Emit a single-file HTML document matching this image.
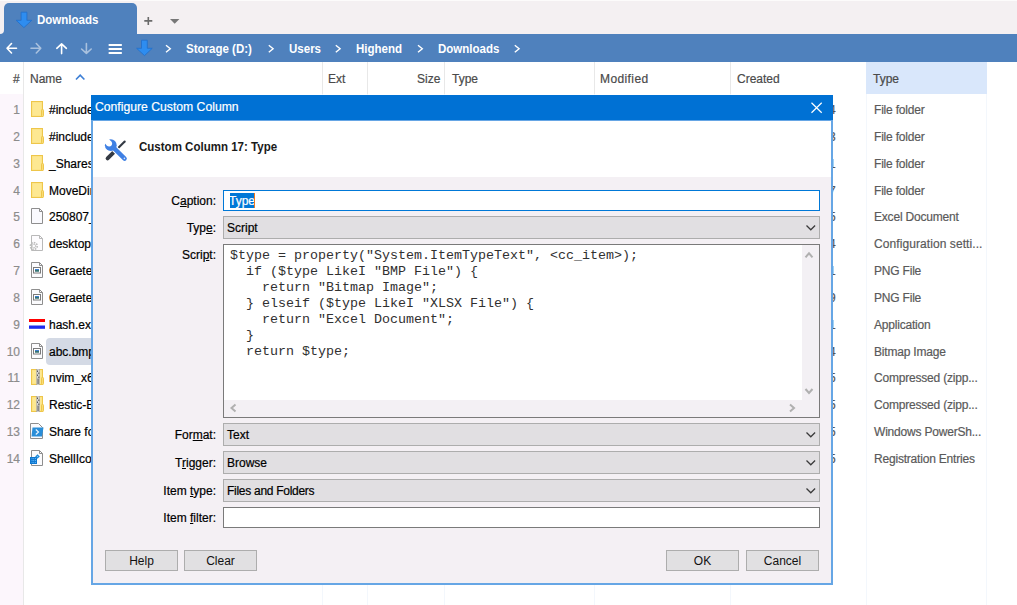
<!DOCTYPE html>
<html><head><meta charset="utf-8">
<style>
*{box-sizing:border-box;margin:0;padding:0}
html,body{width:1017px;height:605px;overflow:hidden}
body{position:relative;background:#fff;font-family:"Liberation Sans",sans-serif;font-size:12px;color:#000}
.a{position:absolute}
.t{position:absolute;line-height:16px;white-space:nowrap;font-size:12px;-webkit-text-stroke:0.2px currentColor}
.b{font-weight:bold;font-size:12.4px;transform:scaleX(.93);transform-origin:0 0;-webkit-text-stroke:0}
svg{position:absolute;overflow:visible}
/* tab bar */
#tabbar{left:0;top:0;width:1017px;height:34px;background:#f4f0f2;border-top:1px solid #fcfbfb}
#tab{left:4px;top:3px;width:133px;height:31px;background:#4f81bd;border-radius:5px 5px 0 0}
#nav{left:0;top:34px;width:1017px;height:28px;background:#4f81bd}
.wt{color:#fff}
/* header */
#hdr{left:0;top:62px;width:1017px;height:32px;background:#fff}
.hc{color:#4a4a4a}
.vl{position:absolute;width:1px;background:#e8e8e8}
.fl{position:absolute;width:1px;background:#f3f7fc;top:94px;height:511px}
.num{color:#8c8c8c;text-align:right;width:20px;left:0}
.nm{color:#000;left:49px}
.ty{color:#5a5a5a;left:874px;letter-spacing:-.2px}
/* dialog */
#dlg{left:91px;top:95px;width:742px;height:490px;background:#f4f0f4;border:2px solid #66a6e5;border-top:0}
#dtitle{left:91px;top:95px;width:742px;height:25px;background:#0071d4;border-bottom:1px solid #66a6e5;box-sizing:content-box}
#dhead{left:93px;top:121px;width:738px;height:56px;background:#fff}
.lbl{color:#000;text-align:right;width:120px;left:96px}
.u{text-decoration:underline;text-underline-offset:1px}
.inp{position:absolute;left:223px;width:597px;background:#fff;border:1px solid #7a7a7a}
.cmb{position:absolute;left:223px;width:597px;height:23px;background:#e1dfe2;border:1px solid #adadad}
.btn{position:absolute;top:550px;width:73px;height:21px;background:#e1e0e2;border:1px solid #adadad;text-align:center;line-height:19px;padding-top:1px;color:#111}
.code{position:absolute;font-family:"Liberation Mono",monospace;font-size:13.333px;line-height:16px;white-space:pre;color:#303030}
</style></head><body>
<svg width="0" height="0" style="position:absolute">
<defs>
 <symbol id="i-folder" viewBox="0 0 16 16">
  <rect x="2.5" y="0.5" width="11" height="15" fill="#fbe07f" stroke="#eec64a"/>
  <rect x="3.5" y="1.5" width="9" height="13" fill="#fde892"/>
  <rect x="12.5" y="8.5" width="2" height="7" rx="0.8" fill="#f9dc74" stroke="#eec64a"/>
 </symbol>
 <symbol id="i-zip" viewBox="0 0 16 16">
  <rect x="2.5" y="0.5" width="11" height="15" fill="#fbe07f" stroke="#eec64a"/>
  <rect x="3.5" y="1.5" width="9" height="13" fill="#fde892"/>
  <rect x="12.5" y="8.5" width="2" height="7" rx="0.8" fill="#f9dc74" stroke="#eec64a"/>
  <rect x="7.6" y="0" width="3" height="16" fill="#d6d6d6" stroke="#9a9a9a" stroke-width="0.5"/>
  <path d="M8.5 1.5v1.5M9.8 3.5v1.5M8.5 5.5v1.5M9.8 7.5v1.5" stroke="#4a4a4a" stroke-width="0.9"/>
  <rect x="8.2" y="9.5" width="1.8" height="5.5" fill="#8c8c8c"/>
 </symbol>
 <symbol id="i-doc" viewBox="0 0 16 16">
  <path d="M2.5 0.5H10.5L13.5 3.5V15.5H2.5Z" fill="#fafafe" stroke="#8e8e8e"/>
  <path d="M10.5 0.5V3.5H13.5" fill="none" stroke="#8e8e8e"/>
 </symbol>
 <symbol id="i-ini" viewBox="0 0 16 16">
  <path d="M2.5 0.5H10.5L13.5 3.5V15.5H2.5Z" fill="#fdfcfe" stroke="#b9b9b9"/>
  <path d="M10.5 0.5V3.5H13.5" fill="none" stroke="#b9b9b9"/>
  <circle cx="4.8" cy="11" r="3.4" fill="none" stroke="#bdbdbd" stroke-width="1.6" stroke-dasharray="1.6 1"/>
  <circle cx="4.8" cy="11" r="1.8" fill="none" stroke="#c8c8c8" stroke-width="1"/>
 </symbol>
 <symbol id="i-img" viewBox="0 0 16 16">
  <path d="M2.5 0.5H10.5L13.5 3.5V15.5H2.5Z" fill="#fbfbfd" stroke="#8e8e8e"/>
  <path d="M10.5 0.5V3.5H13.5" fill="none" stroke="#8e8e8e"/>
  <rect x="4.5" y="5.5" width="7" height="5.5" fill="#fff" stroke="#7b7b7b" stroke-width="1"/>
  <rect x="6" y="7" width="4" height="2.5" fill="#3f7fd0"/>
  <rect x="6" y="8.3" width="4" height="1.2" fill="#2f6d4a"/>
 </symbol>
 <symbol id="i-flag" viewBox="0 0 16 16">
  <rect x="0" y="3" width="16" height="3" fill="#f00"/>
  <rect x="0" y="6" width="16" height="3.5" fill="#fff"/>
  <rect x="0" y="9.5" width="16" height="3.3" fill="#1d2cf0"/>
 </symbol>
 <symbol id="i-ps" viewBox="0 0 16 16">
  <path d="M1.5 0.5H9.5L13.5 4.5V15.5H1.5Z" fill="#fbfbfd" stroke="#8e8e8e"/>
  <path d="M3.5 4.5H14.5L13 13.5H2.5Z" fill="#2a8ed8"/>
  <path d="M6.8 6.5L9.5 9 L6.8 11.5" stroke="#e8f4ff" stroke-width="1.2" fill="none"/>
 </symbol>
 <symbol id="i-reg" viewBox="0 0 16 16">
  <path d="M2.5 0.5H10.5L13.5 3.5V15.5H2.5Z" fill="#fbfbfd" stroke="#8e8e8e"/>
  <path d="M10.5 0.5V3.5H13.5" fill="none" stroke="#8e8e8e"/>
  <rect x="1" y="7" width="7" height="7" fill="#0e78d0"/>
  <path d="M2.6 8.6h0.9M4.3 8.6h0.9M6 8.6h0.9M2.6 10.5h0.9M4.3 10.5h0.9M6 10.5h0.9M2.6 12.4h0.9M4.3 12.4h0.9M6 12.4h0.9" stroke="#6cc0ff" stroke-width="0.9"/>
  <path d="M8.5 4.2L10.8 6.5L8.5 8.8L6.2 6.5Z" fill="#1d8ad8"/>
  <circle cx="8.5" cy="6.5" r="0.6" fill="#8fd0ff"/>
 </symbol>
</defs>
</svg>

<div id="tabbar" class="a"></div>
<div id="tab" class="a"></div>
<!-- inverse corner left of tab -->
<div class="a" style="left:0;top:28px;width:4px;height:6px;background:#4f81bd"></div>
<div class="a" style="left:-2px;top:22px;width:6px;height:12px;background:#f4f0f2;border-radius:0 0 4px 0"></div>

<svg style="left:0;top:0" width="40" height="40">
  <polygon points="21.1,12.2 26.9,12.2 26.9,20.3 31.8,20.3 23.9,27.6 16.2,20.3 21.1,20.3" fill="#2e8df0" stroke="#1f6fcc" stroke-width="0.8" stroke-linejoin="miter"/>
</svg>
<div class="t b wt" style="left:37px;top:12px">Downloads</div>
<svg style="left:0;top:0" width="200" height="40">
  <path d="M148.3 16.9 V24.9 M144.3 20.9 H152.3" stroke="#6b6b6b" stroke-width="1.6"/>
  <polygon points="170,19 179.4,19 174.7,23.8" fill="#777"/>
</svg>

<div id="nav" class="a"></div>
<svg style="left:0;top:0" width="540" height="64">
  <g stroke="#fff" stroke-width="1.6" fill="none" stroke-linecap="round" stroke-linejoin="round">
    <path d="M7 48.3 H16.5 M11.5 43.5 L7 48.3 L11.5 53"/>
    <path d="M31 48.3 H40.8 M36.3 43.5 L40.8 48.3 L36.3 53" stroke="#a9c1de"/>
    <path d="M61.6 43.8 V53.6 M56.8 48.3 L61.6 43.8 L66.4 48.3"/>
    <path d="M86.4 43.6 V53.4 M81.6 49 L86.4 53.4 L91.2 49" stroke="#a9c1de"/>
  </g>
  <g fill="#fff">
    <rect x="108.5" y="44" width="13.5" height="2" rx="0.8"/>
    <rect x="108.5" y="48" width="13.5" height="2" rx="0.8"/>
    <rect x="108.5" y="52" width="13.5" height="2" rx="0.8"/>
  </g>
  <polygon points="141.5,40.2 147.3,40.2 147.3,48.3 152.2,48.3 144.5,55.6 136.6,48.3 141.5,48.3" fill="#2e8df0" stroke="#1f6fcc" stroke-width="0.8"/>
  <g stroke="#fff" stroke-width="1.4" fill="none">
    <path d="M166 45.2 L170.3 48.7 L166 52.2"/>
    <path d="M268.8 45.2 L273.1 48.7 L268.8 52.2"/>
    <path d="M335.8 45.2 L340.1 48.7 L335.8 52.2"/>
    <path d="M418 45.2 L422.3 48.7 L418 52.2"/>
    <path d="M514.8 45.2 L519.1 48.7 L514.8 52.2"/>
  </g>
</svg>
<div class="t b wt" style="left:186px;top:41px">Storage (D:)</div>
<div class="t b wt" style="left:289px;top:41px">Users</div>
<div class="t b wt" style="left:356px;top:41px">Highend</div>
<div class="t b wt" style="left:438px;top:41px">Downloads</div>

<!-- header -->
<div id="hdr" class="a"></div>
<div class="a" style="left:0;top:94px;width:23px;height:511px;background:#fcf6fc"></div>
<div class="a" style="left:866px;top:62px;width:121px;height:32px;background:#d9e7fb"></div>
<div class="vl" style="left:23px;top:62px;height:543px"></div>
<div class="vl" style="left:322px;top:62px;height:32px"></div>
<div class="vl" style="left:367px;top:62px;height:32px"></div>
<div class="vl" style="left:444px;top:62px;height:32px"></div>
<div class="vl" style="left:594px;top:62px;height:32px"></div>
<div class="vl" style="left:730px;top:62px;height:32px"></div>
<div class="fl" style="left:322px"></div>
<div class="fl" style="left:367px"></div>
<div class="fl" style="left:444px"></div>
<div class="fl" style="left:594px"></div>
<div class="fl" style="left:730px"></div>
<div class="fl" style="left:866px"></div>
<div class="fl" style="left:986px"></div>
<div class="t hc" style="left:13px;top:71px">#</div>
<div class="t hc" style="left:30px;top:71px">Name</div>
<svg style="left:0;top:0" width="100" height="90"><path d="M76 79.5 L80.2 75.2 L84.4 79.5" stroke="#3d7fd6" stroke-width="1.6" fill="none"/></svg>
<div class="t hc" style="left:328px;top:71px">Ext</div>
<div class="t hc" style="left:417px;top:71px">Size</div>
<div class="t hc" style="left:452px;top:71px">Type</div>
<div class="t hc" style="left:600px;top:71px;letter-spacing:.4px">Modified</div>
<div class="t hc" style="left:737px;top:71px">Created</div>
<div class="t hc" style="left:873px;top:71px">Type</div>

<!-- rows -->
<div class="t num" style="top:102px">1</div>
<svg style="left:29px;top:101px" width="16" height="16"><use href="#i-folder"/></svg>
<div class="t nm" style="top:102px">#include</div>
<div class="t ty" style="top:102px">File folder</div>
<div class="t" style="left:829px;top:102px;color:#555">4</div>
<div class="t num" style="top:129px">2</div>
<svg style="left:29px;top:128px" width="16" height="16"><use href="#i-folder"/></svg>
<div class="t nm" style="top:129px">#include</div>
<div class="t ty" style="top:129px">File folder</div>
<div class="t" style="left:829px;top:129px;color:#555">3</div>
<div class="t num" style="top:156px">3</div>
<svg style="left:29px;top:155px" width="16" height="16"><use href="#i-folder"/></svg>
<div class="t nm" style="top:156px">_Shares</div>
<div class="t ty" style="top:156px">File folder</div>
<div class="t" style="left:829px;top:156px;color:#555">1</div>
<div class="t num" style="top:183px">4</div>
<svg style="left:29px;top:182px" width="16" height="16"><use href="#i-folder"/></svg>
<div class="t nm" style="top:183px">MoveDir</div>
<div class="t ty" style="top:183px">File folder</div>
<div class="t" style="left:829px;top:183px;color:#555">7</div>
<div class="t num" style="top:209px">5</div>
<svg style="left:29px;top:208px" width="16" height="16"><use href="#i-doc"/></svg>
<div class="t nm" style="top:209px">250807_A</div>
<div class="t ty" style="top:209px">Excel Document</div>
<div class="t" style="left:829px;top:209px;color:#555">5</div>
<div class="t num" style="top:236px">6</div>
<svg style="left:29px;top:235px" width="16" height="16"><use href="#i-ini"/></svg>
<div class="t nm" style="top:236px">desktop.ini</div>
<div class="t ty" style="top:236px;letter-spacing:.08px">Configuration setti...</div>
<div class="t" style="left:829px;top:236px;color:#555">4</div>
<div class="t num" style="top:263px">7</div>
<svg style="left:29px;top:262px" width="16" height="16"><use href="#i-img"/></svg>
<div class="t nm" style="top:263px">Geraeter</div>
<div class="t ty" style="top:263px">PNG File</div>
<div class="t" style="left:829px;top:263px;color:#555">1</div>
<div class="t num" style="top:290px">8</div>
<svg style="left:29px;top:289px" width="16" height="16"><use href="#i-img"/></svg>
<div class="t nm" style="top:290px">Geraeter</div>
<div class="t ty" style="top:290px">PNG File</div>
<div class="t" style="left:829px;top:290px;color:#555">9</div>
<div class="t num" style="top:317px">9</div>
<svg style="left:29px;top:316px" width="16" height="16"><use href="#i-flag"/></svg>
<div class="t nm" style="top:317px">hash.exe</div>
<div class="t ty" style="top:317px">Application</div>
<div class="t" style="left:829px;top:317px;color:#555">1</div>
<div class="a" style="left:46px;top:338px;width:120px;height:27px;background:#d4dae5;border-radius:4px"></div>
<div class="t num" style="top:344px">10</div>
<svg style="left:29px;top:343px" width="16" height="16"><use href="#i-img"/></svg>
<div class="t nm" style="top:344px">abc.bmp</div>
<div class="t ty" style="top:344px">Bitmap Image</div>
<div class="t" style="left:829px;top:344px;color:#555">4</div>
<div class="t num" style="top:370px">11</div>
<svg style="left:29px;top:369px" width="16" height="16"><use href="#i-zip"/></svg>
<div class="t nm" style="top:370px">nvim_x64</div>
<div class="t ty" style="top:370px">Compressed (zipp...</div>
<div class="t" style="left:829px;top:370px;color:#555">5</div>
<div class="t num" style="top:397px">12</div>
<svg style="left:29px;top:396px" width="16" height="16"><use href="#i-zip"/></svg>
<div class="t nm" style="top:397px">Restic-B</div>
<div class="t ty" style="top:397px">Compressed (zipp...</div>
<div class="t" style="left:829px;top:397px;color:#555">5</div>
<div class="t num" style="top:424px">13</div>
<svg style="left:29px;top:423px" width="16" height="16"><use href="#i-ps"/></svg>
<div class="t nm" style="top:424px">Share fo</div>
<div class="t ty" style="top:424px">Windows PowerSh...</div>
<div class="t" style="left:829px;top:424px;color:#555">5</div>
<div class="t num" style="top:451px">14</div>
<svg style="left:29px;top:450px" width="16" height="16"><use href="#i-reg"/></svg>
<div class="t nm" style="top:451px">ShellIco</div>
<div class="t ty" style="top:451px">Registration Entries</div>
<div class="t" style="left:829px;top:451px;color:#555">5</div>
<!-- /rows -->

<!-- dialog -->
<div id="dlg" class="a"></div>
<div id="dtitle" class="a"></div>
<div class="t wt" style="left:95px;top:99px;font-size:12.2px">Configure Custom Column</div>
<svg style="left:0;top:0" width="840" height="130"><path d="M811.5 102.7 L821.7 112.7 M821.7 102.7 L811.5 112.7" stroke="#fff" stroke-width="1.2"/></svg>
<div id="dhead" class="a"></div>
<svg style="left:0;top:0" width="140" height="170">
  <path d="M124.7 141.5 L118.7 147.5" stroke="#343a44" stroke-width="2.1" stroke-linecap="round"/>
  <path d="M113.4 152.6 L107.6 158.4" stroke="#343a44" stroke-width="3.9" stroke-linecap="round"/>
  <path d="M113.2 147.4 L124.6 158.6" stroke="#fff" stroke-width="6.6" stroke-linecap="round"/>
  <circle cx="110.8" cy="145.2" r="5.9" fill="#3f80e4"/>
  <circle cx="109.2" cy="143.6" r="2.9" fill="#fff"/>
  <path d="M109.2 143.6 L104 138.4" stroke="#fff" stroke-width="5.8"/>
  <path d="M113.2 147.4 L124.6 158.6" stroke="#3f80e4" stroke-width="4.4" stroke-linecap="round"/>
  <circle cx="124.4" cy="158.4" r="0.8" fill="#d6e4fb"/>
</svg>
<div class="t b" style="left:139px;top:139px;color:#1a1a1a">Custom Column 17: Type</div>

<div class="t lbl" style="top:193px">C<span class="u">a</span>ption:</div>
<div class="t lbl" style="top:220px">Typ<span class="u">e</span>:</div>
<div class="t lbl" style="top:247px">Scri<span class="u">p</span>t:</div>
<div class="t lbl" style="top:427px">For<span class="u">m</span>at:</div>
<div class="t lbl" style="top:455px">T<span class="u">r</span>igger:</div>
<div class="t lbl" style="top:483px">Item <span class="u">t</span>ype:</div>
<div class="t lbl" style="top:510px">Item <span class="u">f</span>ilter:</div>

<!-- caption input -->
<div class="inp" style="top:190px;height:21px;border-color:#0078d7"></div>
<div class="a" style="left:230px;top:193px;width:25px;height:15px;background:#0078d7"></div>
<div class="t" style="left:229px;top:193px;color:#fff">Type</div>
<div class="a" style="left:254px;top:193px;width:1px;height:15px;background:#f07a20"></div>

<!-- type combo -->
<div class="cmb" style="top:216px"></div>
<div class="t" style="left:227px;top:220px">Script</div>

<!-- script textarea -->
<div class="inp" style="top:244px;height:174px"></div>
<div class="a" style="left:802px;top:245px;width:17px;height:172px;background:#f3f0f4"></div>
<div class="a" style="left:224px;top:400px;width:595px;height:17px;background:#f3f0f4"></div>
<div class="code" style="left:230px;top:248px">$type = property("System.ItemTypeText", &lt;cc_item&gt;);
  if ($type LikeI "BMP File") {
    return "Bitmap Image";
  } elseif ($type LikeI "XLSX File") {
    return "Excel Document";
  }
  return $type;</div>

<!-- combos -->
<div class="cmb" style="top:423px"></div>
<div class="t" style="left:227px;top:427px">Text</div>
<div class="cmb" style="top:451px"></div>
<div class="t" style="left:227px;top:455px">Browse</div>
<div class="cmb" style="top:479px"></div>
<div class="t" style="left:227px;top:483px;letter-spacing:-.28px">Files and Folders</div>
<div class="inp" style="top:507px;height:21px"></div>

<svg style="left:0;top:0" width="840" height="540">
  <g stroke="#3a3a3a" stroke-width="1.25" fill="none">
    <path d="M806.5 225.5 L810.8 229.8 L815.1 225.5"/>
    <path d="M806.5 432.5 L810.8 436.8 L815.1 432.5"/>
    <path d="M806.5 460.5 L810.8 464.8 L815.1 460.5"/>
    <path d="M806.5 488.5 L810.8 492.8 L815.1 488.5"/>
  </g>
  <g stroke="#b0b0b0" stroke-width="2" fill="none">
    <path d="M805.5 257.3 L809 253.3 L812.5 257.3"/>
    <path d="M805.5 389 L809 393 L812.5 389"/>
    <path d="M235.5 404.5 L231.5 408 L235.5 411.5"/>
    <path d="M790 404.5 L794 408 L790 411.5"/>
  </g>
</svg>

<!-- buttons -->
<div class="btn" style="left:105px">Help</div>
<div class="btn" style="left:184px">Clear</div>
<div class="btn" style="left:666px">OK</div>
<div class="btn" style="left:746px">Cancel</div>

</body></html>
